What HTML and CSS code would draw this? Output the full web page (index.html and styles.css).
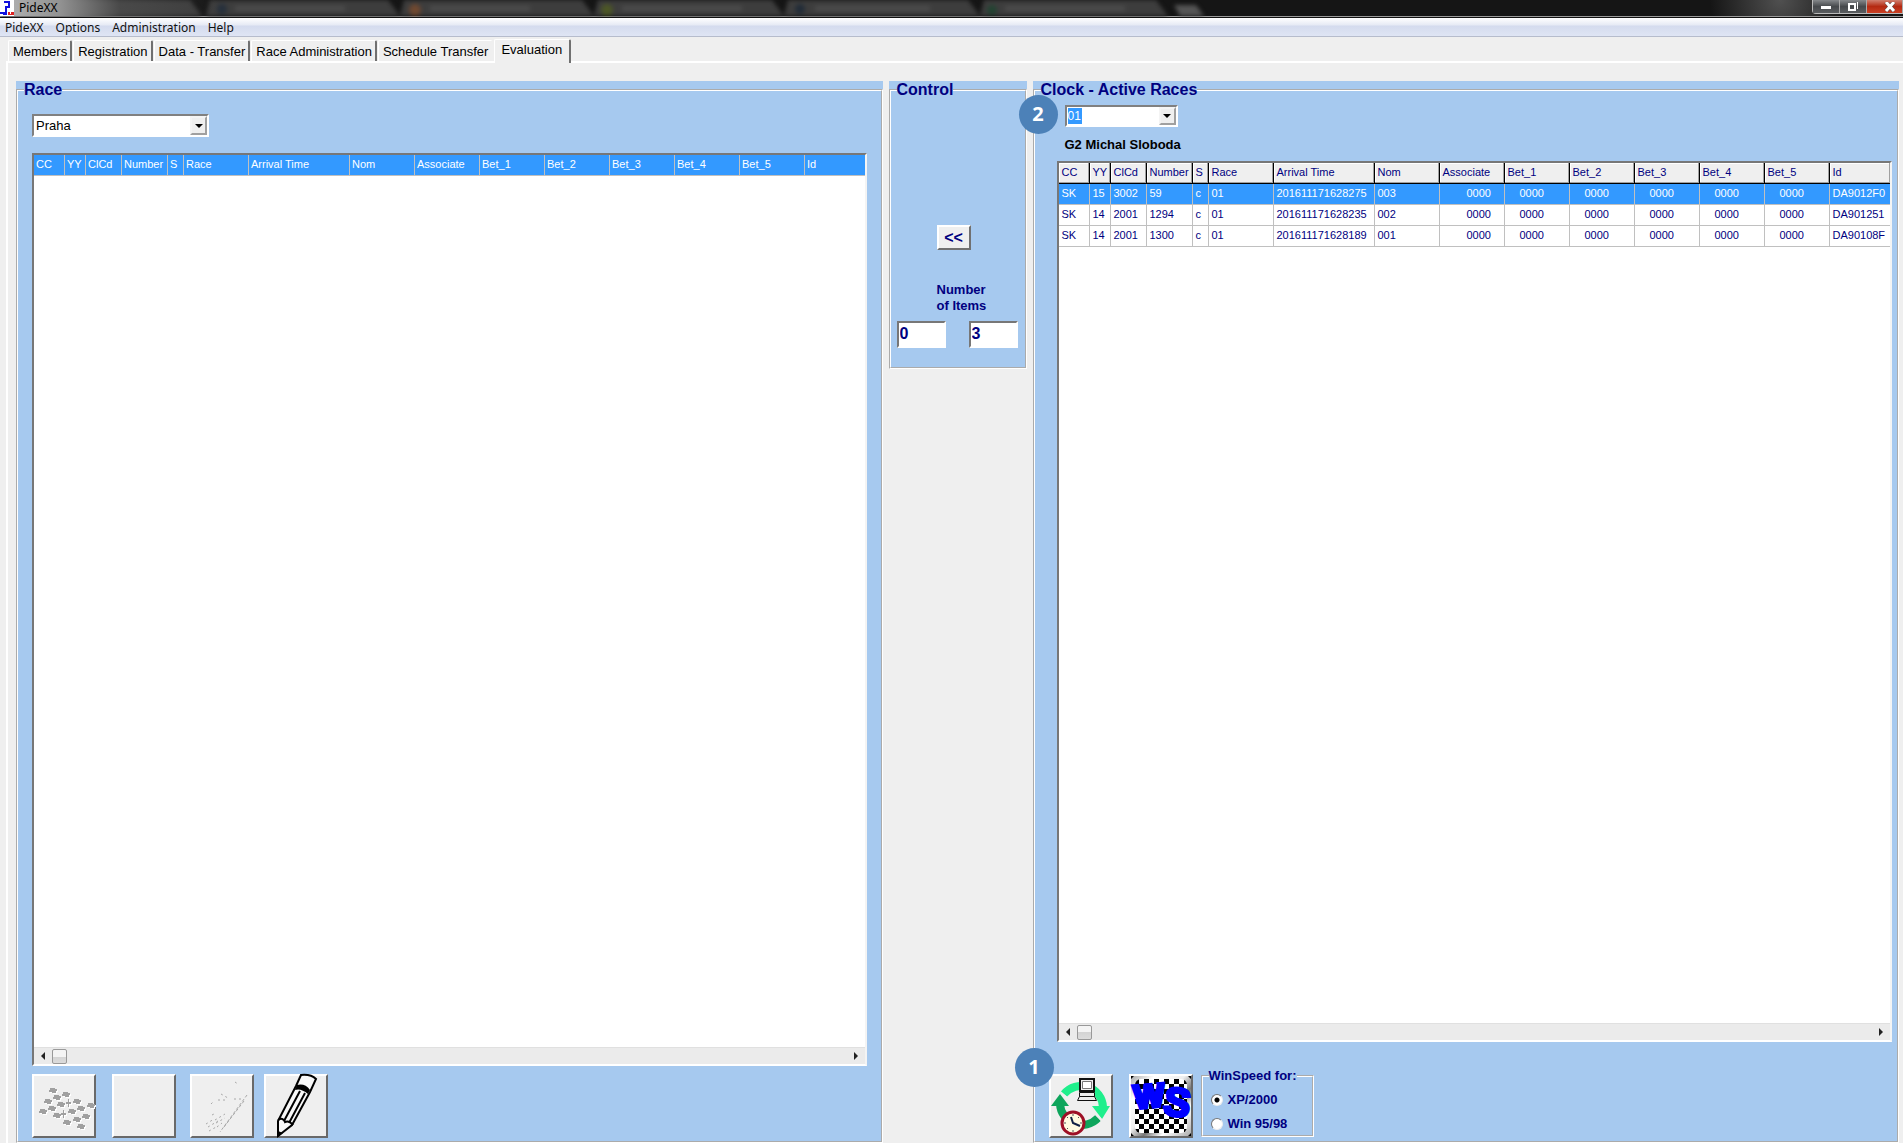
FILE: index.html
```html
<!DOCTYPE html>
<html lang="en">
<head>
<meta charset="utf-8">
<title>PideXX</title>
<link rel="stylesheet" href="styles.css">
</head>
<body>
<header class="titlebar">
  <svg class="glass" width="1280" height="16" viewBox="0 0 1280 16" aria-hidden="true">
    <g fill="#3d3d3d">
      <path d="M0 0H190L202 16H0Z"/><path d="M210 0H388L400 16H206Z"/><path d="M404 0H582L594 16H400Z"/><path d="M598 0H772L784 16H594Z"/><path d="M788 0H968L980 16H784Z"/><path d="M984 0H1156L1168 16H980Z"/>
    </g>
    <path d="M1174 5h22l8 11h-24z" fill="#555"/>
    <g fill="#4c4c4c"><path d="M235 6h110v5H235zM430 6h100v5H430zM622 6h120v5H622zM815 6h115v5H815zM1005 6h120v5h-120z"/></g>
    <circle cx="222" cy="9" r="5" fill="#26303c"/><circle cx="415" cy="10" r="6" fill="#6f4830"/><circle cx="607" cy="10" r="6" fill="#4c5626"/><circle cx="800" cy="9" r="5" fill="#222c38"/><circle cx="992" cy="10" r="5" fill="#234332"/>
  </svg>
  <svg class="app-icon" width="14" height="18" viewBox="0 0 14 18" aria-hidden="true">
    <path fill="#fff" d="M0 0h14v16H0z"/><path fill="none" stroke="#11d" stroke-width="2" d="M4 2h5v5H6v5M0 13h6"/><path fill="#11d" d="M3 12h4v3H3z"/><path fill="#d22" d="M8 12h6v3H8z"/><path stroke="#fff" d="M10.500 12v2"/>
  </svg>
  <h1 class="app-title">PideXX</h1>
  <div class="win-controls">
    <button type="button" aria-label="Minimize"><svg width="12" height="8" viewBox="0 0 12 8"><path fill="#fff" d="M1 3h10v3H1z"/></svg></button>
    <button type="button" aria-label="Restore"><svg width="12" height="10" viewBox="0 0 12 10"><path fill="none" stroke="#fff" stroke-width="2" d="M2 2h6v6H2z"/><path stroke="#fff" d="M10.500 0v7"/></svg></button>
    <button type="button" class="close" aria-label="Close"><svg width="12" height="10" viewBox="0 0 12 10"><path stroke="#544" stroke-width="4" d="M2 0l8 9M10 0L2 9"/><path stroke="#fff" stroke-width="3" d="M2 0l8 9M10 0L2 9"/></svg></button>
  </div>
</header>

<nav class="menubar">
  <a href="#">PideXX</a><a href="#">Options</a><a href="#">Administration</a><a href="#">Help</a>
</nav>

<div class="tabs" role="tablist">
  <button type="button" role="tab">Members</button>
  <button type="button" role="tab">Registration</button>
  <button type="button" role="tab">Data - Transfer</button>
  <button type="button" role="tab">Race Administration</button>
  <button type="button" role="tab" class="before-active">Schedule Transfer</button>
  <button type="button" role="tab" class="active" aria-selected="true">Evaluation</button>
</div>

<main class="sheet">
  <section class="panel race">
    <fieldset>
      <legend>Race</legend>
      <div class="combo wide">
        <select aria-label="Race"><option>Praha</option></select><span class="drop"></span>
      </div>
      <div class="grid">
        <div class="grid-body">
          <table class="selected-head">
            <colgroup><col class="c-cc"><col class="c-yy"><col class="c-club"><col class="c-num"><col class="c-s"><col class="c-std"><col class="c-time"><col class="c-std"><col class="c-std"><col class="c-std"><col class="c-std"><col class="c-std"><col class="c-std"><col class="c-std"><col></colgroup>
            <thead><tr><th>CC</th><th>YY</th><th>ClCd</th><th>Number</th><th>S</th><th>Race</th><th>Arrival Time</th><th>Nom</th><th>Associate</th><th>Bet_1</th><th>Bet_2</th><th>Bet_3</th><th>Bet_4</th><th>Bet_5</th><th>Id</th></tr></thead>
          </table>
        </div>
        <div class="scroll"><button type="button" class="left" aria-label="Scroll left"></button><span class="thumb"></span><button type="button" class="right" aria-label="Scroll right"></button></div>
      </div>
      <div class="tools">
        <button type="button" class="tool" aria-label="Race flags" disabled>
          <svg width="64" height="64" viewBox="0 0 64 64"><defs><path id="chip" d="M-3-2h5v1h2v2h-1v2h-4v-1h-3v-2h1z"/>
            <g id="chips"><use href="#chip" x="21" y="16"/><use href="#chip" x="34" y="20"/><use href="#chip" x="25" y="23"/><use href="#chip" x="16" y="27"/><use href="#chip" x="45" y="27"/><use href="#chip" x="29" y="30"/><use href="#chip" x="20" y="34"/><use href="#chip" x="49" y="34"/><use href="#chip" x="59" y="31"/><use href="#chip" x="11" y="37"/><use href="#chip" x="40" y="37"/><use href="#chip" x="25" y="41"/><use href="#chip" x="54" y="42"/><use href="#chip" x="45" y="45"/><use href="#chip" x="35" y="48"/><use href="#chip" x="49" y="52"/><path d="M36 25h1v3h2v2h-2v3h-1v-3h-2v-2h2zM31 36h1v3h2v2h-2v3h-1v-3h-2v-2h2z"/></g></defs>
            <use href="#chips" x="1" y="1" fill="#fff"/><use href="#chips" fill="#a0a0a0"/></svg>
        </button>
        <button type="button" class="tool" aria-label="Blank" disabled></button>
        <button type="button" class="tool" aria-label="Sketch" disabled>
          <svg width="64" height="64" viewBox="0 0 64 64" fill="none" stroke="#a8a8a8"><path stroke-dasharray="3 2" d="M57 21L30 58M54 27L34 53"/><path stroke-dasharray="2 3" d="M28 26h10M44 25h8M31 20l7 4M45 8l3 2M21 30l2-2M16 50l8-5M18 53l10-6M19 57l9-5M25 46l10-6M26 49l9-5M27 53l5-4M22 41l2-1"/></svg>
        </button>
        <button type="button" class="tool" aria-label="Edit">
          <svg width="64" height="64" viewBox="0 0 64 64"><path fill="#f8f8f8" stroke="#000" stroke-width="2" d="M37 1q10-1 15 4L46 18 28 51 14 62V47L32 12Z"/><path d="M33 11q8-2 13 5l-2 4q-7-6-13-4zM14 57l5 2-5 4z"/><path fill="none" stroke="#000" stroke-width="2" d="M14 46q5-3 7 2 4-2 8 3M36 17L20 47M41 19L25 49"/></svg>
        </button>
      </div>
    </fieldset>
  </section>

  <section class="panel control">
    <fieldset>
      <legend>Control</legend>
      <button type="button" class="move">&lt;&lt;</button>
      <p class="caption">Number<br>of Items</p>
      <div class="counts">
        <input type="text" value="0" aria-label="Items in race">
        <input type="text" value="3" aria-label="Items in clock">
      </div>
    </fieldset>
  </section>

  <section class="panel clock">
    <span class="badge two">2</span>
    <fieldset>
      <legend>Clock - Active Races</legend>
      <div class="combo small">
        <input type="text" value="01" aria-label="Clock race"><button type="button" class="drop" aria-label="Open list"></button>
      </div>
      <p class="owner">G2 Michal Sloboda</p>
      <div class="grid">
        <div class="grid-body">
          <table class="raised-head">
            <colgroup><col class="c-cc"><col class="c-yy"><col class="c-club"><col class="c-num"><col class="c-s"><col class="c-std"><col class="c-time"><col class="c-std"><col class="c-std"><col class="c-std"><col class="c-std"><col class="c-std"><col class="c-std"><col class="c-std"><col></colgroup>
            <thead><tr><th>CC</th><th>YY</th><th>ClCd</th><th>Number</th><th>S</th><th>Race</th><th>Arrival Time</th><th>Nom</th><th>Associate</th><th>Bet_1</th><th>Bet_2</th><th>Bet_3</th><th>Bet_4</th><th>Bet_5</th><th>Id</th></tr></thead>
            <tbody>
              <tr class="current"><td>SK</td><td>15</td><td>3002</td><td>59</td><td>c</td><td>01</td><td>201611171628275</td><td>003</td><td class="assoc">0000</td><td class="bet">0000</td><td class="bet">0000</td><td class="bet">0000</td><td class="bet">0000</td><td class="bet">0000</td><td>DA9012F0</td></tr>
              <tr><td>SK</td><td>14</td><td>2001</td><td>1294</td><td>c</td><td>01</td><td>201611171628235</td><td>002</td><td class="assoc">0000</td><td class="bet">0000</td><td class="bet">0000</td><td class="bet">0000</td><td class="bet">0000</td><td class="bet">0000</td><td>DA901251</td></tr>
              <tr><td>SK</td><td>14</td><td>2001</td><td>1300</td><td>c</td><td>01</td><td>201611171628189</td><td>001</td><td class="assoc">0000</td><td class="bet">0000</td><td class="bet">0000</td><td class="bet">0000</td><td class="bet">0000</td><td class="bet">0000</td><td>DA90108F</td></tr>
            </tbody>
          </table>
        </div>
        <div class="scroll"><button type="button" class="left" aria-label="Scroll left"></button><span class="thumb"></span><button type="button" class="right" aria-label="Scroll right"></button></div>
      </div>
      <div class="clock-tools">
        <span class="badge one">1</span>
        <button type="button" class="tool" aria-label="Read clock">
          <svg width="64" height="64" viewBox="0 0 64 64">
            <g fill="none" stroke-width="8"><path stroke="#1fef8c" d="M15 20A22 22 0 0 1 54 33"/><path stroke="#0ea55c" d="M49 44A22 22 0 0 1 11 30"/></g>
            <path fill="#1fef8c" d="M43 32h18L53 45z"/><path fill="#0ea55c" d="M2 32L11 20l9 12z"/><path stroke="#efefef" stroke-width="2" d="M11 18l7 6M48 41l6 7"/>
            <path fill="#efefef" stroke="#111" stroke-width="2" d="M31 5h14v12H31z"/><path fill="#fff" stroke="#777" d="M33.500 7.500h9v7h-9z"/><path fill="#eee" stroke="#111" d="M30.500 18.500h15v4h-15zM30.500 22.500h15l2 4h-19z"/>
            <circle cx="24" cy="49" r="11" fill="#fffbe0" stroke="#9d1026" stroke-width="3"/><g stroke="#555"><path d="M24 40v2M24 56v2M15 49h2M31 49h2M18 43l1 1M30 43l-1 1M18 55l1-1"/></g><path fill="none" stroke="#124" stroke-width="2" d="M22 43l2 6 7 3"/>
          </svg>
        </button>
        <button type="button" class="tool" aria-label="WinSpeed">
          <svg width="64" height="64" viewBox="0 0 64 64">
            <defs><linearGradient id="metal" x1="0" y1="0" x2="1" y2="1"><stop offset="0" stop-color="#aaa"/><stop offset=".2" stop-color="#fff"/><stop offset=".45" stop-color="#eee"/><stop offset=".6" stop-color="#777"/><stop offset=".75" stop-color="#fff"/><stop offset="1" stop-color="#aaa"/></linearGradient>
            <pattern id="check" width="10" height="10" patternUnits="userSpaceOnUse"><path fill="#fff" d="M0 0h10v10H0z"/><path d="M0 0h5v5H0zM5 5h5v5H5z"/></pattern></defs>
            <path fill="url(#metal)" d="M2 2h60v60H2z"/><rect x="6" y="5" width="52" height="54" rx="6" fill="url(#check)"/>
            <path d="M2 2h3l-3 3zM62 2h-3l3 3zM2 62h3l-3-3zM62 62h-3l3-3z"/>
            <g fill="#00f" stroke="#00f" stroke-width="4" font-family="Liberation Sans, sans-serif" font-weight="bold"><text x="5" y="33" font-size="32" transform="rotate(-5 20 22)">W</text><text x="35" y="42" font-size="40" stroke-width="3" transform="rotate(8 48 28)">S</text></g>
          </svg>
        </button>
        <fieldset class="mode">
          <legend>WinSpeed for:</legend>
          <label><input type="radio" name="mode" checked>XP/2000</label>
          <label><input type="radio" name="mode">Win 95/98</label>
        </fieldset>
      </div>
    </fieldset>
  </section>
</main>
</body>
</html>
```
FILE: styles.css
```css
* { box-sizing: border-box; }

body {
  margin: 0;
  min-height: 100vh;
  display: flex;
  flex-direction: column;
  background: #efefef;
  color: #000;
  font: 13px/16px "Liberation Sans", Arial, sans-serif;
  overflow-x: hidden;
}

button, input, select { font: inherit; color: inherit; margin: 0; }
p, h1 { margin: 0; }

/* Window frame */
.titlebar {
  position: relative;
  display: flex;
  align-items: flex-start;
  height: 18px;
  overflow: hidden;
  background: radial-gradient(circle at 1780px 0, #505050, transparent 70px), #151515;
  border-bottom: 1px solid #111;
  box-shadow: inset 0 -1px #9a9a9a;
}
.glass { position: absolute; left: 0; top: 0; filter: blur(2px); }
.titlebar::before {
  content: "";
  position: absolute;
  inset: 0 auto 1px 0;
  z-index: 1;
  width: 220px;
  background: linear-gradient(90deg, #b4b4b4, #929292 60px, #55555580 120px, transparent);
}
.app-icon, .app-title { position: relative; z-index: 2; }
.app-title {
  margin-left: 5px;
  font: 12px/15px "Noto Sans", sans-serif;
}
.win-controls {
  display: flex;
  margin-left: auto;
  height: 14px;
  border: 1px solid #bbb;
  border-width: 0 0 1px 1px;
  border-radius: 0 0 0 4px;
}
.win-controls button {
  display: grid;
  place-items: center;
  width: 27px;
  padding: 0;
  border: 0;
  border-right: 1px solid #aaa;
  background: linear-gradient(#85888b, #46494c 50%, #5a5d60);
}
.win-controls .close { width: 36px; padding-left: 10px; background: linear-gradient(#d08070, #b42a12 50%, #cc4024); }

.menubar {
  display: flex;
  gap: 12px;
  height: 19px;
  padding-left: 5px;
  border-bottom: 1px solid #b6bccc;
  background: linear-gradient(#fff, #e6eaf5 7px, #d4dbee 8px, #dfe5f4);
  font: 12px/20px "Noto Sans", sans-serif;
}
.menubar a { color: #111; text-decoration: none; }

/* Tabs */
.tabs { display: flex; align-items: flex-end; gap: 1px; height: 26px; padding-left: 8px; }
.tabs button {
  height: 21px;
  margin-bottom: 2px;
  padding: 1px 3px 0 4px;
  border: 1px solid #fff;
  border-right: 2px solid #707070;
  border-bottom: 0;
  border-radius: 2px 2px 0 0;
  background: #efefef;
}
.tabs .before-active { border-right-color: #efefef; }
.tabs .active { z-index: 1; height: 24px; margin: 0; padding: 0 7px 4px 6px; }

.sheet {
  flex: 1;
  display: grid;
  grid-template-columns: minmax(0, 1fr) 138px minmax(0, 1fr);
  gap: 6px;
  margin: -2px 0 0 6px;
  padding: 18px 4px 0 8px;
  border: 2px solid #fff;
  border-width: 2px 0 0 2px;
}

/* Group boxes */
.panel { position: relative; display: flex; flex-direction: column; background: #a6c9ef; color: #000080; }
fieldset { min-width: 0; margin: 0; border: 2px groove #fff; }
legend { padding: 0; font-weight: bold; }
.panel > fieldset { flex: 1; display: flex; flex-direction: column; padding: 15px 14px 3px; }
.panel > fieldset > legend { font-size: 16px; line-height: 18px; }
.race legend { margin-left: -8px; }

.combo {
  position: relative;
  display: flex;
  border: 2px solid;
  border-color: #808080 #fff #fff #808080;
  background: #fff;
  color: #000;
}
.combo.wide { width: 177px; height: 23px; }
.combo select { appearance: none; flex: 1; padding: 1px 2px 0; border: 0; background: none; }
.combo.small { width: 113px; height: 22px; margin-left: 8px; font-size: 12px; }
.combo.small input {
  flex: 1;
  min-width: 0;
  padding: 0 1px;
  border: 0;
  color: #fff;
  background: linear-gradient(#3399ff, #3399ff) 1px 1px / 14px 16px no-repeat;
}
.drop {
  display: grid;
  place-items: center;
  width: 17px;
  padding: 0;
  border: 2px outset #f4f4f4;
  background: #efefef;
  pointer-events: none;
}
.drop::after { content: ""; border: 4px solid transparent; border-top-color: #000; border-bottom: 0; }

/* Data grids */
.grid {
  flex: 1;
  display: flex;
  flex-direction: column;
  margin-top: 16px;
  border: 2px solid;
  border-color: #777 #f4f4f4 #fff #777;
  background: #fff;
}
.grid-body { flex: 1; overflow: hidden; }
table { width: 100%; table-layout: fixed; border-collapse: separate; border-spacing: 0; font-size: 11px; line-height: 16px; }
th, td {
  height: 21px;
  padding: 0 0 2px 2px;
  border: 1px solid #c0c0c0;
  border-width: 0 1px 1px 0;
  text-align: left;
  font-weight: normal;
  white-space: nowrap;
  overflow: hidden;
}
th:last-child, td:last-child { border-right: 0; }
.c-cc { width: 31px; }
.c-yy { width: 21px; }
.c-club { width: 36px; }
.c-num { width: 46px; }
.c-s { width: 16px; }
.c-std { width: 65px; }
.c-time { width: 101px; }
.selected-head th, .current td { background: #3399ff; color: #fff; }
.raised-head th { background: #efefef; border-color: #000; box-shadow: inset -1px -1px #a0a0a0, inset 1px 1px #fff; }
.raised-head th, .raised-head td { padding-left: 3px; }
.raised-head .assoc { padding-left: 27px; }
.raised-head .bet { padding-left: 15px; }

.scroll { display: flex; align-items: center; height: 17px; background: #ebebeb; border-top: 1px solid #e0e0e0; }
.scroll button { display: grid; place-items: center; width: 18px; height: 16px; padding: 0; border: 0; background: none; }
.scroll button::after { content: ""; border: 4px solid transparent; }
.scroll .left::after { border-right-color: #222; border-left: 0; }
.scroll .right { margin-left: auto; }
.scroll .right::after { border-left-color: #222; border-right: 0; }
.thumb { width: 15px; height: 15px; border: 1px solid #999; border-radius: 2px; background: linear-gradient(#f4f4f4 50%, #d4d4d4 50%, #dcdcdc); }

/* Picture buttons */
.tools { display: grid; grid-template-columns: 80px 78px 74px 64px; margin-top: 8px; }
.tool {
  width: 64px;
  height: 64px;
  padding: 0;
  border: 2px solid;
  border-color: #fff #696969 #696969 #fff;
  background: #efefef;
}
.tool svg { display: block; margin: -2px; overflow: visible; }

/* Control column */
.control { align-self: start; height: 288px; }
.control > fieldset { padding: 126px 6px 0; }
.move {
  width: 34px;
  height: 25px;
  margin-left: 40px;
  padding: 0;
  border: 2px solid;
  border-color: #fff #707070 #707070 #fff;
  background: #efefef;
  font-size: 16px;
  font-weight: bold;
}
.caption { margin: 32px 0 7px 40px; font-weight: bold; }
.counts { display: flex; justify-content: space-between; padding-right: 1px; }
.counts input {
  width: 49px;
  height: 27px;
  padding: 0 1px 1px;
  border: 2px solid;
  border-color: #777 #fff #fff #777;
  background: #fff;
  font-size: 16px;
  font-weight: bold;
}

/* Clock column */
.clock > fieldset { padding: 6px 5px 3px 22px; }
.clock > fieldset > legend { margin-left: -16px; }
.owner { margin: 10px 0 0 8px; color: #000; font-weight: bold; }
.clock .grid { margin-top: 8px; }
.clock-tools { position: relative; display: flex; margin: 32px 0 0 -8px; }
.clock-tools .tool + .tool { margin-left: 16px; }
.mode { display: flex; flex-direction: column; width: 113px; height: 69px; margin: -6px 0 0 8px; padding: 4px 0 0 8px; font-weight: bold; }
.mode legend { margin-left: -2px; }
.mode label { display: flex; flex: none; align-items: center; gap: 5px; height: 24px; }
.mode input {
  appearance: none;
  width: 12px;
  height: 12px;
  border: 1px solid;
  border-color: #777 #eee #eee #777;
  border-radius: 50%;
  background: #fff;
}
.mode input:checked { background: radial-gradient(circle, #000 2px, #fff 3px); }

.badge {
  position: absolute;
  z-index: 2;
  width: 39px;
  height: 39px;
  border-radius: 50%;
  background: #4c81b8;
  color: #fff;
  font: bold 20px/38px "Open Sans", sans-serif;
  text-align: center;
}
.badge.two { left: -14px; top: 14px; }
.badge.one { left: -34px; top: -26px; }
```
